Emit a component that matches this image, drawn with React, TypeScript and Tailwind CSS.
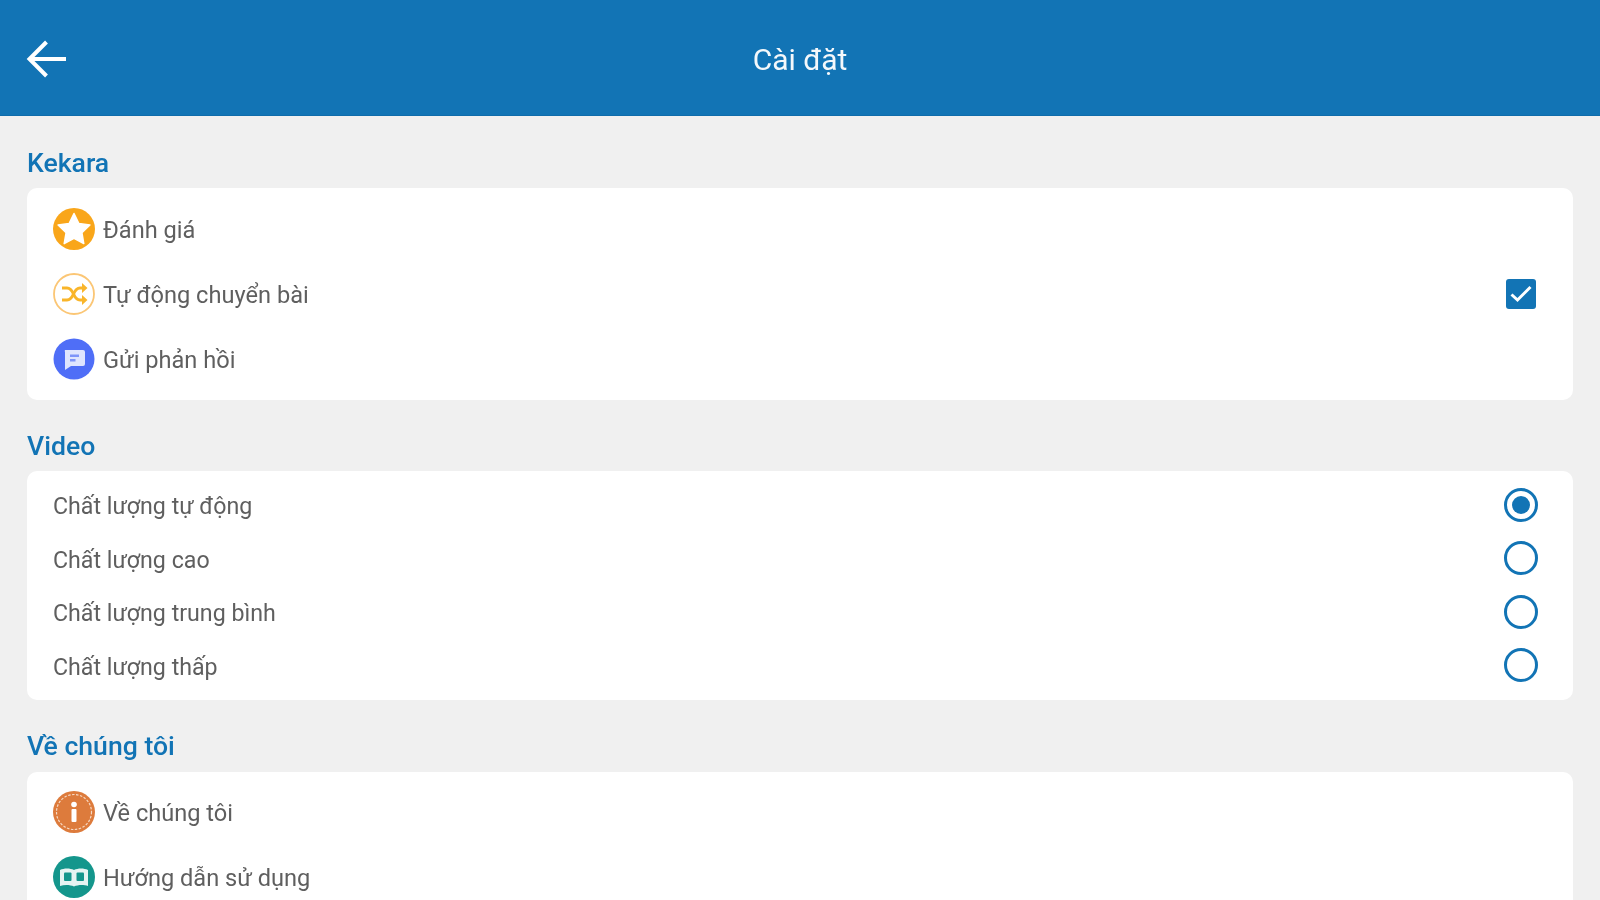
import React from "react";

function StarIcon() {
  return (
    <svg width="42" height="42" viewBox="0 0 42 42">
      <circle cx="21" cy="21" r="21" fill="#f9a61a" />
      <path d="M21 5.500l4.900 10 11 1.500-8 7.700 1.900 10.900L21 30.400l-9.800 5.200 1.900-10.900-8-7.700 11-1.500z" fill="#fff" stroke="#fff" strokeWidth="1.500" strokeLinejoin="round" />
    </svg>
  );
}

function ShuffleIcon() {
  return (
    <svg width="42" height="42" viewBox="0 0 42 42" fill="none">
      <circle cx="21" cy="21" r="20" fill="#fff" stroke="#fbc675" strokeWidth="1.800" />
      <path d="M9 15h5c3 0 4.500 1.500 6.500 6s3.500 6 6.500 6h4" stroke="#f9b52a" strokeWidth="3" />
      <path d="M9 27h5c3 0 4.500-1.500 6.500-6s3.500-6 6.500-6h4" stroke="#f9b52a" strokeWidth="3" />
      <path d="M29 10l5.500 5-5.500 5zM29 22l5.500 5-5.500 5z" fill="#f9b52a" />
    </svg>
  );
}

function FeedbackIcon() {
  return (
    <svg width="42" height="42" viewBox="0 0 42 42">
      <circle cx="21" cy="21" r="20.500" fill="#4f6ef7" />
      <path d="M12 12h18a2 2 0 0 1 2 2v12a2 2 0 0 1-2 2H18l-6 4V14a2 2 0 0 1 0-2z" fill="#dfe5fe" />
      <path d="M17 16.500h9v2.500h-9zM17 21h5.500v2.500H17z" fill="#7f95f9" />
    </svg>
  );
}

function InfoIcon() {
  return (
    <svg width="42" height="42" viewBox="0 0 42 42">
      <circle cx="21" cy="21" r="21" fill="#dd7b3c" />
      <circle cx="21" cy="21" r="17.500" fill="none" stroke="#f6d9c4" strokeWidth="1.200" strokeDasharray="2.500 1.500" />
      <circle cx="21" cy="13.500" r="2.800" fill="#fff" />
      <rect x="18.500" y="18" width="5" height="13" rx="1" fill="#fff" />
    </svg>
  );
}

function BookIcon() {
  return (
    <svg width="42" height="42" viewBox="0 0 42 42">
      <circle cx="21" cy="21" r="21" fill="#14968c" />
      <path d="M7 14c4-2 10-2 14 0 4-2 10-2 14 0v16c-4-1.500-10-1.500-14 .5-4-2-10-2-14-.5z" fill="#e6f4f2" />
      <rect x="11" y="16.500" width="7.500" height="8.500" rx="1" fill="#14968c" />
      <rect x="23.500" y="16.500" width="7.500" height="8.500" rx="1" fill="#14968c" />
    </svg>
  );
}

function Check() {
  return (
    <div className="w-[30px] h-[30px] rounded-[3px] bg-[#1274b5] flex items-center justify-center">
      <svg width="24" height="24" viewBox="0 0 24 24" fill="none">
        <path d="M2.500 12.500l6 5.500L21.500 5" stroke="#fff" strokeWidth="3" />
      </svg>
    </div>
  );
}

function Radio({ on }: { on?: boolean }) {
  return (
    <div className="w-[34px] h-[34px] rounded-full border-[3px] border-[#1274b5] flex items-center justify-center">
      {on && <div className="w-[18px] h-[18px] rounded-full bg-[#1274b5]" />}
    </div>
  );
}

function IconRow({ icon, label, right }: { icon: React.ReactNode; label: string; right?: React.ReactNode }) {
  return (
    <div className="h-[65px] flex items-center pl-[26px] pr-[35px]">
      <div className="w-[42px] h-[42px] shrink-0">{icon}</div>
      <span className="ml-[8px] text-[23.6px] text-[#5f5f5f] flex-1 pt-[5px]">{label}</span>
      {right}
    </div>
  );
}

function RadioRow({ label, on }: { label: string; on?: boolean }) {
  return (
    <div className="h-[53.5px] flex items-center pl-[26px] pr-[35px]">
      <span className="text-[23.2px] text-[#5f5f5f] flex-1 pt-[4px]">{label}</span>
      <Radio on={on} />
    </div>
  );
}

function Title({ children, gap }: { children: React.ReactNode; gap?: boolean }) {
  return (
    <div className={gap ? "text-[26.6px] font-medium text-[#1274b5] leading-[28px] mb-[12px]" : "text-[26.6px] font-medium text-[#1274b5] leading-[28px] mb-[11px]"}>
      {children}
    </div>
  );
}

export default function App() {
  return (
    <div className="w-[1600px] h-[900px] overflow-hidden bg-[#f0f0f0] font-['Roboto',sans-serif] blur-[0.5px]">
      <header className="relative h-[116px] flex items-center justify-center bg-[#1274b5] pt-[3px] border-b border-[#0f6cab]">
        <svg className="absolute left-[26px] top-[38px]" width="42" height="42" viewBox="0 0 42 42" fill="none">
          <path d="M3 21h37M20.500 4L3.500 21l17 17" stroke="#fff" strokeWidth="4" />
        </svg>
        <h1 className="text-[30px] text-[#f4f8fb]">Cài đặt</h1>
      </header>
      <main className="px-[27px] pt-[33px]">
        <section className="mb-[32px]">
          <Title>Kekara</Title>
          <div className="bg-white rounded-[10px] pt-[8px] pb-[9px]">
            <IconRow icon={<StarIcon />} label="Đánh giá" />
            <IconRow icon={<ShuffleIcon />} label="Tự động chuyển bài" right={<div className="mr-[2px]"><Check /></div>} />
            <IconRow icon={<FeedbackIcon />} label="Gửi phản hồi" />
          </div>
        </section>
        <section className="mb-[32px]">
          <Title>Video</Title>
          <div className="bg-white rounded-[10px] pt-[7px] pb-[8px]">
            <RadioRow label="Chất lượng tự động" on />
            <RadioRow label="Chất lượng cao" />
            <RadioRow label="Chất lượng trung bình" />
            <RadioRow label="Chất lượng thấp" />
          </div>
        </section>
        <section>
          <Title gap>Về chúng tôi</Title>
          <div className="bg-white rounded-[10px] pt-[7px] pb-[8px]">
            <IconRow icon={<InfoIcon />} label="Về chúng tôi" />
            <IconRow icon={<BookIcon />} label="Hướng dẫn sử dụng" />
          </div>
        </section>
      </main>
    </div>
  );
}
